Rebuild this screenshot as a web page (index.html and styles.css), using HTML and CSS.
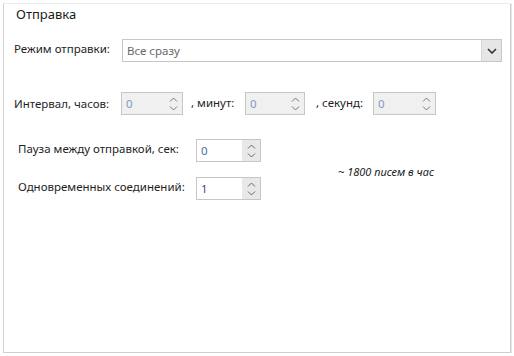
FILE: index.html
```html
<!doctype html>
<html>
  <head>
    <meta charset="utf-8">
    <title>Отправка</title>
    <link rel="stylesheet" href="styles.css">
  </head>
  <body>
    <div class="panel">
      <div class="title">Отправка</div>

      <div class="row row-mode">
        <span class="label lbl-mode">Режим отправки:</span>
        <div class="combo">
          <span class="combo-text">Все сразу</span>
          <span class="combo-btn">
            <svg width="10" height="6" viewBox="0 0 10 6"><path d="M1 1 L5 5 L9 1" fill="none" stroke="#333" stroke-width="1.6"/></svg>
          </span>
        </div>
      </div>

      <div class="row row-interval">
        <span class="label lbl-hours">Интервал, часов:</span>
        <div class="spin disabled w-hours">
          <span class="spin-val">0</span>
          <span class="spin-btn">
            <svg width="9" height="5" viewBox="0 0 9 5"><path d="M1 4.5 L4.5 1 L8 4.5" fill="none" stroke="#777" stroke-width="1"/></svg>
            <svg width="9" height="5" viewBox="0 0 9 5"><path d="M1 0.5 L4.5 4 L8 0.5" fill="none" stroke="#777" stroke-width="1"/></svg>
          </span>
        </div>
        <span class="label lbl-min">, минут:</span>
        <div class="spin disabled w-min">
          <span class="spin-val">0</span>
          <span class="spin-btn">
            <svg width="9" height="5" viewBox="0 0 9 5"><path d="M1 4.5 L4.5 1 L8 4.5" fill="none" stroke="#777" stroke-width="1"/></svg>
            <svg width="9" height="5" viewBox="0 0 9 5"><path d="M1 0.5 L4.5 4 L8 0.5" fill="none" stroke="#777" stroke-width="1"/></svg>
          </span>
        </div>
        <span class="label lbl-sec">, секунд:</span>
        <div class="spin disabled w-sec">
          <span class="spin-val">0</span>
          <span class="spin-btn">
            <svg width="9" height="5" viewBox="0 0 9 5"><path d="M1 4.5 L4.5 1 L8 4.5" fill="none" stroke="#777" stroke-width="1"/></svg>
            <svg width="9" height="5" viewBox="0 0 9 5"><path d="M1 0.5 L4.5 4 L8 0.5" fill="none" stroke="#777" stroke-width="1"/></svg>
          </span>
        </div>
      </div>

      <div class="grid-lower">
        <span class="label">Пауза между отправкой, сек:</span>
        <div class="spin w-lower">
          <span class="spin-val">0</span>
          <span class="spin-btn">
            <svg width="9" height="5" viewBox="0 0 9 5"><path d="M1 4.5 L4.5 1 L8 4.5" fill="none" stroke="#666" stroke-width="1"/></svg>
            <svg width="9" height="5" viewBox="0 0 9 5"><path d="M1 0.5 L4.5 4 L8 0.5" fill="none" stroke="#666" stroke-width="1"/></svg>
          </span>
        </div>
        <span class="note">~ 1800 писем в час</span>

        <span class="label">Одновременных соединений:</span>
        <div class="spin w-lower">
          <span class="spin-val val-one">1</span>
          <span class="spin-btn">
            <svg width="9" height="5" viewBox="0 0 9 5"><path d="M1 4.5 L4.5 1 L8 4.5" fill="none" stroke="#666" stroke-width="1"/></svg>
            <svg width="9" height="5" viewBox="0 0 9 5"><path d="M1 0.5 L4.5 4 L8 0.5" fill="none" stroke="#666" stroke-width="1"/></svg>
          </span>
        </div>
      </div>
    </div>
  </body>
</html>
```

FILE: styles.css
```css
body {
  margin: 0;
  background: #ffffff;
  font-family: "Noto Sans", "Open Sans", sans-serif;
  font-size: 11.5px;
  color: #1e1e1e;
}

.panel {
  box-sizing: border-box;
  width: 508px;
  height: 350px;
  margin: 3px 0 0 3px;
  border: 1px solid #cfcfcf;
  border-top-color: #ececec;
  box-shadow: 1px 1px 0 #e6e6e6;
  background: #ffffff;
}

.title {
  padding: 1px 0 0 12px;
  font-size: 13px;
  line-height: 18px;
  color: #1a1a1a;
}

.row {
  display: flex;
  align-items: center;
}
.row > * { flex-shrink: 0; }

.label {
  white-space: nowrap;
  line-height: 16px;
}

/* row 1: mode */
.row-mode {
  margin-top: 16px;
  padding-left: 10px;
}
.lbl-mode { width: 108px; margin-top: -3px; }

.combo {
  box-sizing: border-box;
  width: 380px;
  height: 23px;
  border: 1px solid #c6c6c6;
  display: flex;
  align-items: center;
}
.combo-text {
  flex: 1;
  padding-left: 4px;
  color: #6a6a6a;
}
.combo-btn {
  width: 19px;
  height: 100%;
  background: #e6e6e6;
  border-left: 1px solid #d6d6d6;
  display: flex;
  align-items: center;
  justify-content: center;
}

/* spinners */
.spin {
  box-sizing: border-box;
  height: 23px;
  border: 1px solid #c6c6c6;
  display: flex;
  align-items: center;
  background: #ffffff;
}
.spin-val {
  flex: 1;
  padding-left: 4px;
  color: #4d6d9a;
}
.val-one { color: #5a3f73; }
.spin-btn {
  width: 18px;
  height: 100%;
  display: flex;
  flex-direction: column;
  align-items: center;
  justify-content: center;
  gap: 4px;
  background: #e8e8e8;
}
.spin.disabled { background: #f0f0f0; }
.spin.disabled .spin-btn { background: #f0f0f0; }
.spin.disabled .spin-val { color: #7f9bc2; }

/* row 2: interval */
.row-interval {
  margin-top: 30px;
  padding-left: 10px;
}
.lbl-hours { width: 107px; }
.w-hours { width: 62px; }
.lbl-min { width: 54px; padding-left: 8px; margin-top: -2px; }
.w-min { width: 60px; }
.lbl-sec { width: 57px; padding-left: 11px; margin-top: -2px; }
.w-sec { width: 63px; }

/* lower block */
.grid-lower {
  display: grid;
  grid-template-columns: 178px 65px auto;
  grid-template-rows: 23px 23px;
  row-gap: 15px;
  align-items: center;
  margin-top: 24px;
  padding-left: 14px;
}
.w-lower { width: 65px; }
.grid-lower .label { margin-top: -4px; }

.note {
  grid-row: 1 / span 2;
  grid-column: 3;
  padding-left: 77px;
  padding-top: 4px;
  font-style: italic;
  font-size: 11px;
  color: #222222;
}
```
